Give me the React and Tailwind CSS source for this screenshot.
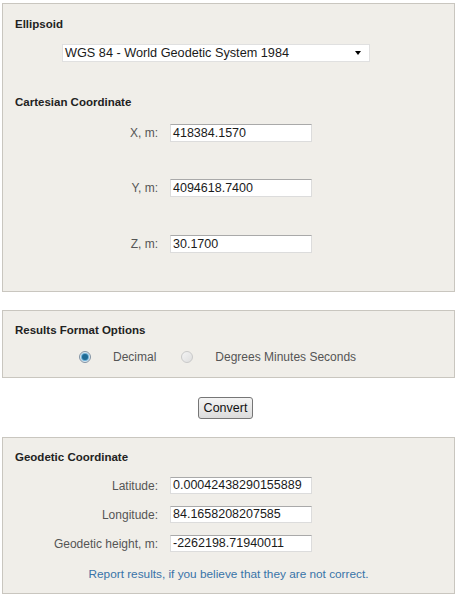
import React from "react";

function Field({ label, value, h = "h-[18px]" }) {
  return (
    <div className="flex items-center">
      <div className="w-[143px] text-right text-[12px] leading-[16px] text-[#555]">{label}</div>
      <div
        className={`ml-[12px] w-[142px] ${h} bg-white border border-[#dcdcdc] border-t-[#a9a9a9] flex items-center pl-[2px] text-[12.5px] text-[#1a1a1a] leading-none`}
      >
        {value}
      </div>
    </div>
  );
}

function Radio({ checked }) {
  return checked ? (
    <span className="flex shrink-0 w-[12px] h-[12px] rounded-full border border-[#8393a3] bg-[#e6edf3] items-center justify-center">
      <span className="block w-[6px] h-[6px] rounded-full bg-[#1f6a94] shadow-[0_0_1px_1px_#5fa8d3]" />
    </span>
  ) : (
    <span className="block shrink-0 w-[12px] h-[12px] rounded-full border border-[#c9c9c9] bg-gradient-to-br from-[#f4f4f4] to-[#dedede]" />
  );
}

export default function App() {
  return (
    <div className="w-[459px] h-[600px] bg-white pt-[3px] font-['Liberation_Sans',Arial,sans-serif] text-[#222]">
      {/* Panel 1 */}
      <div className="ml-[2px] w-[453px] h-[289px] border border-[#c9c6bf] bg-[#f0eee9] pt-[12px] pl-[12px]">
        <div className="text-[11.5px] font-bold leading-[16px] text-[#222]">Ellipsoid</div>
        <div className="mt-[12px] ml-[47px] w-[308px] h-[18px] bg-white border border-[#e0e0e0] flex items-center justify-between pl-[2px] pr-[8px] text-[12.7px] text-[#1a1a1a] leading-none">
          <span>WGS 84 - World Geodetic System 1984</span>
          <span className="w-0 h-0 border-l-[3px] border-r-[3px] border-t-[4px] border-l-transparent border-r-transparent border-t-black" />
        </div>
        <div className="mt-[32px] text-[11.5px] font-bold leading-[16px] text-[#222]">Cartesian Coordinate</div>
        <div className="mt-[14px]">
          <Field label="X, m:" value="418384.1570" />
        </div>
        <div className="mt-[37px]">
          <Field label="Y, m:" value="4094618.7400" />
        </div>
        <div className="mt-[38px]">
          <Field label="Z, m:" value="30.1700" />
        </div>
      </div>

      {/* Panel 2 */}
      <div className="mt-[18px] ml-[2px] w-[453px] h-[68px] border border-[#c9c6bf] bg-[#f0eee9] pt-[11px] pl-[12px]">
        <div className="text-[11.5px] font-bold leading-[16px] text-[#222]">Results Format Options</div>
        <div className="mt-[11px] h-[16px] flex items-center text-[12px] text-[#555]">
          <span className="ml-[64px] block">
            <Radio checked />
          </span>
          <span className="ml-[22px]">Decimal</span>
          <span className="ml-[25px] block">
            <Radio />
          </span>
          <span className="ml-[22px]">Degrees Minutes Seconds</span>
        </div>
      </div>

      {/* Convert */}
      <div className="mt-[19px] ml-[198px] w-[55px] h-[22px] rounded-[3px] border border-[#767676] bg-gradient-to-b from-[#f4f4f4] to-[#dcdcdc] flex items-center justify-center text-[12.5px] text-[#111] leading-none">
        Convert
      </div>

      {/* Panel 3 */}
      <div className="mt-[18px] ml-[2px] w-[453px] h-[157px] border border-[#c9c6bf] bg-[#f0eee9] pt-[11px] pl-[12px]">
        <div className="text-[11.5px] font-bold leading-[16px] text-[#222]">Geodetic Coordinate</div>
        <div className="mt-[12px]">
          <Field label="Latitude:" value="0.00042438290155889" h="h-[17px]" />
        </div>
        <div className="mt-[12px]">
          <Field label="Longitude:" value="84.1658208207585" h="h-[17px]" />
        </div>
        <div className="mt-[12px]">
          <Field label="Geodetic height, m:" value="-2262198.71940011" h="h-[17px]" />
        </div>
        <div className="mt-[14px] pr-[12px] text-center text-[11.8px] leading-[16px] text-[#3873a8]">
          Report results, if you believe that they are not correct.
        </div>
      </div>
    </div>
  );
}
